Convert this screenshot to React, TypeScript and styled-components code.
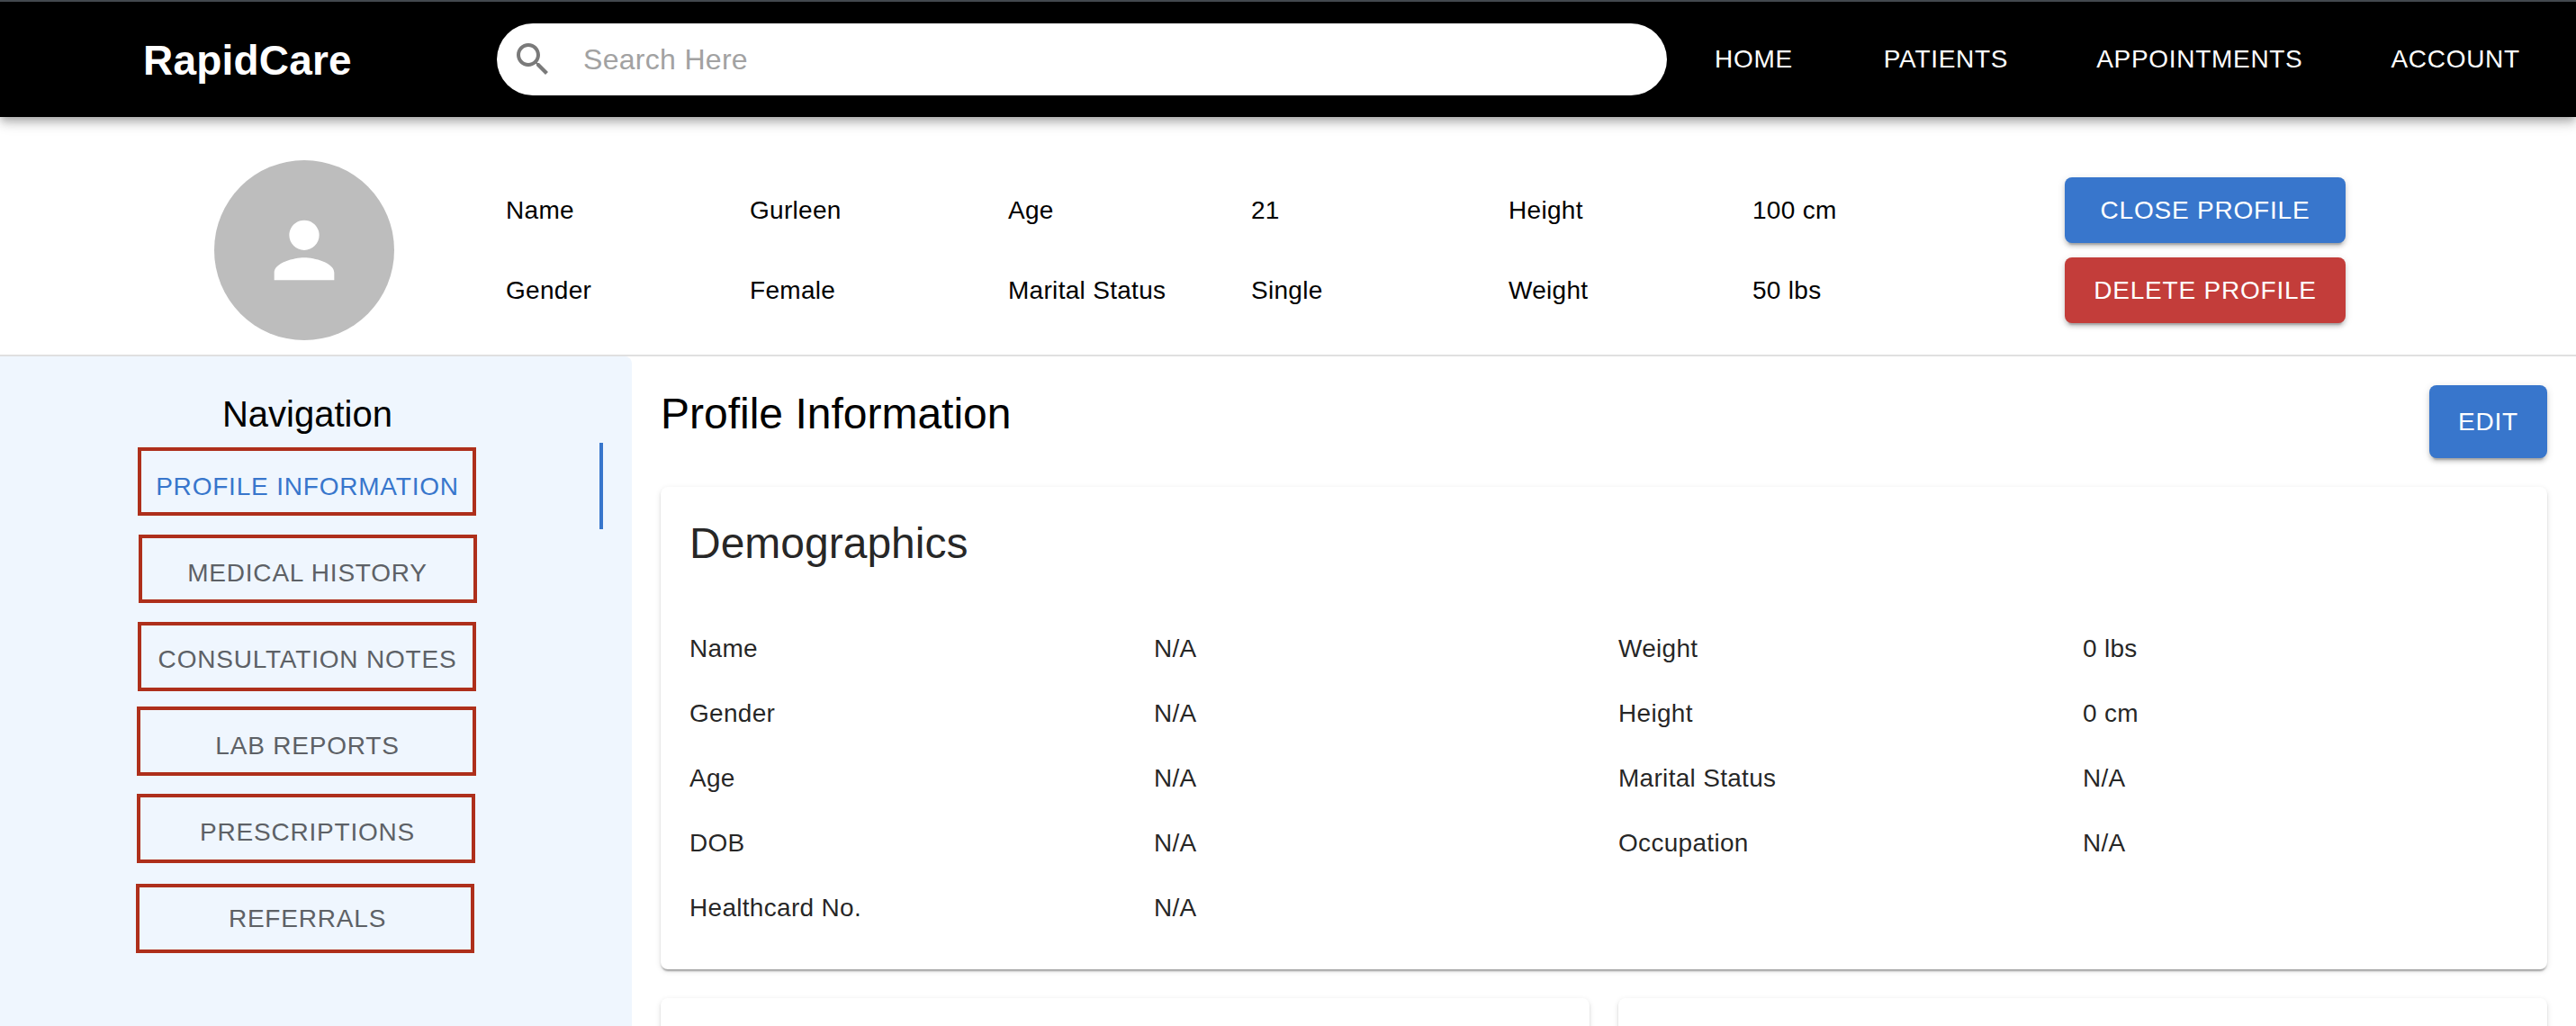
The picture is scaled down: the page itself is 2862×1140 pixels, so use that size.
import React from "react";
import styled, { createGlobalStyle } from "styled-components";

const Global = createGlobalStyle`
  html, body { margin: 0; padding: 0; height: 100%; overflow: hidden; background: #fff; }
  body { font-family: "Liberation Sans", Arial, sans-serif; color: #000; }
  * { box-sizing: border-box; }
`;

const Page = styled.div`
  width: 2862px;
  height: 1140px;
  overflow: hidden;
  display: flex;
  flex-direction: column;
`;

const Header = styled.header`
  position: relative;
  z-index: 2;
  flex: none;
  height: 130px;
  border-top: 2px solid #43484e;
  background: #000;
  display: flex;
  align-items: center;
  padding-left: 159px;
  box-shadow: 0 4px 8px -2px rgba(0,0,0,.2), 0 8px 10px rgba(0,0,0,.14), 0 2px 20px rgba(0,0,0,.12);
`;

const Logo = styled.div`
  width: 393px;
  color: #fff;
  font-size: 46px;
  font-weight: 700;
  line-height: 64px;
  letter-spacing: 0.2px;
  margin-top: 2px;
`;

const SearchBar = styled.label`
  width: 1300px;
  height: 80px;
  border-radius: 40px;
  background: #fff;
  display: flex;
  align-items: center;
  padding-left: 16px;
  svg { width: 48px; height: 48px; fill: #7a7a7a; flex: none; }
`;

const SearchInput = styled.input`
  flex: 1;
  border: 0;
  outline: 0;
  background: transparent;
  margin-left: 30px;
  font: 32px "Liberation Sans", Arial, sans-serif;
  letter-spacing: 0.3px;
  color: #000;
  &::placeholder { color: #a2a2a2; opacity: 1; }
`;

const NavLinks = styled.nav`
  display: flex;
  gap: 98px;
  margin-left: 52px;
`;

const NavLink = styled.a`
  color: #fff;
  font-size: 28px;
  line-height: 44px;
  letter-spacing: 0.7px;
  white-space: nowrap;
  &:first-child { margin: 0 3px 0 1px; }
`;

const ProfileBar = styled.section`
  flex: none;
  height: 266px;
  border-bottom: 2px solid #e0e0e0;
  display: flex;
  align-items: flex-start;
  padding: 48px 0 0 238px;
`;

const Avatar = styled.div`
  width: 200px;
  height: 200px;
  border-radius: 50%;
  background: #bdbdbd;
  display: flex;
  align-items: center;
  justify-content: center;
  svg { width: 100px; height: 100px; fill: #fff; }
`;

const InfoGrid = styled.div`
  margin: 19px 0 0 124px;
  display: grid;
  grid-template-columns: 271px 287px 270px 286px 271px 347px 312px;
  grid-template-rows: 73px 73px;
  row-gap: 16px;
  align-items: center;
`;

const InfoText = styled.div`
  font-size: 28px;
  line-height: 42px;
  letter-spacing: 0.3px;
  padding-top: 1px;
  color: #000;
`;

const RaisedButton = styled.button<{ $tone: "blue" | "red"; $w: number; $h: number }>`
  width: ${(p) => p.$w}px;
  height: ${(p) => p.$h}px;
  border: 0;
  border-radius: 8px;
  padding: 0;
  color: #fff;
  background: ${(p) => (p.$tone === "blue" ? "#3876cc" : "#c33d3a")};
  font: 28px "Liberation Sans", Arial, sans-serif;
  letter-spacing: 0.8px;
  box-shadow: 0 6px 2px -4px rgba(0,0,0,.2), 0 4px 4px rgba(0,0,0,.14), 0 2px 10px rgba(0,0,0,.12);
`;

const Body = styled.div`
  flex: 1;
  display: flex;
  min-height: 0;
`;

const Sidebar = styled.aside`
  flex: none;
  width: 702px;
  background: #eff6fe;
  border-top-right-radius: 8px;
  padding: 32px 32px 0 13px;
`;

const SideTitle = styled.h6`
  margin: 0;
  font-size: 40px;
  font-weight: 400;
  line-height: 64px;
  text-align: center;
`;

const TabList = styled.div`
  display: flex;
  flex-direction: column;
`;

const Tab = styled.div<{ $active?: boolean }>`
  position: relative;
  height: 96px;
  display: flex;
  align-items: center;
  justify-content: center;
  font-size: 28px;
  letter-spacing: 0.8px;
  color: ${(p) => (p.$active ? "#3876cc" : "#5d6166")};
  border-right: 4px solid ${(p) => (p.$active ? "#3876cc" : "transparent")};
  padding: 2px 0 0 4px;
`;

const Annotation = styled.span<{ $l: number; $t: number; $w: number; $h: number }>`
  position: absolute;
  left: ${(p) => p.$l}px;
  top: ${(p) => p.$t}px;
  width: ${(p) => p.$w}px;
  height: ${(p) => p.$h}px;
  border: 4px solid #ae2f1b;
`;

const Content = styled.main`
  flex: 1;
  min-width: 0;
  padding: 32px 32px 0;
  display: flex;
  flex-direction: column;
`;

const TitleRow = styled.div`
  flex: none;
  display: flex;
  justify-content: space-between;
  align-items: flex-start;
  margin-bottom: 32px;
`;

const PageTitle = styled.h5`
  margin: 0;
  font-size: 48px;
  font-weight: 400;
  line-height: 64px;
`;

const Card = styled.section`
  flex: none;
  background: #fff;
  border-radius: 8px;
  box-shadow: 0 4px 2px -2px rgba(0,0,0,.2), 0 2px 2px rgba(0,0,0,.14), 0 2px 6px rgba(0,0,0,.12);
  padding: 32px 0 32px 32px;
`;

const CardTitle = styled.h5`
  margin: -1px 0 49px;
  font-size: 48px;
  font-weight: 400;
  line-height: 64px;
  color: rgba(0,0,0,.87);
`;

const DetailGrid = styled.div`
  display: grid;
  grid-template-columns: repeat(4, 516px);
  grid-auto-rows: 72px;
  align-items: center;
`;

const DetailText = styled.div`
  font-size: 28px;
  line-height: 42px;
  letter-spacing: 0.3px;
  color: rgba(0,0,0,.87);
`;

const CardRow = styled.div`
  flex: none;
  display: grid;
  grid-template-columns: 1fr 1fr;
  gap: 32px;
  margin-top: 32px;
`;

const EmptyCard = styled(Card)`
  height: 300px;
`;

const info = ["Name", "Gurleen", "Age", "21", "Height", "100 cm"];
const info2 = ["Gender", "Female", "Marital Status", "Single", "Weight", "50 lbs"];

const tabs = [
  { label: "PROFILE INFORMATION", box: [140, 5, 376, 76] },
  { label: "MEDICAL HISTORY", box: [141, 6, 376, 76] },
  { label: "CONSULTATION NOTES", box: [140, 7, 376, 77] },
  { label: "LAB REPORTS", box: [139, 5, 377, 77] },
  { label: "PRESCRIPTIONS", box: [139, 6, 376, 77] },
  { label: "REFERRALS", box: [138, 10, 376, 77] },
];

const details = [
  ["Name", "N/A", "Weight", "0 lbs"],
  ["Gender", "N/A", "Height", "0 cm"],
  ["Age", "N/A", "Marital Status", "N/A"],
  ["DOB", "N/A", "Occupation", "N/A"],
  ["Healthcard No.", "N/A", "", ""],
];

export default function App() {
  return (
    <Page>
      <Global />
      <Header>
        <Logo>RapidCare</Logo>
        <SearchBar>
          <svg viewBox="0 0 24 24"><path d="M15.5 14h-.79l-.28-.27C15.41 12.59 16 11.11 16 9.5 16 5.91 13.09 3 9.5 3S3 5.91 3 9.5 5.91 16 9.5 16c1.61 0 3.09-.59 4.23-1.57l.27.28v.79l5 4.99L20.49 19l-4.99-5zm-6 0C7.01 14 5 11.99 5 9.5S7.01 5 9.5 5 14 7.01 14 9.5 11.99 14 9.5 14z" /></svg>
          <SearchInput placeholder="Search Here" />
        </SearchBar>
        <NavLinks>
          <NavLink>HOME</NavLink>
          <NavLink>PATIENTS</NavLink>
          <NavLink>APPOINTMENTS</NavLink>
          <NavLink>ACCOUNT</NavLink>
        </NavLinks>
      </Header>
      <ProfileBar>
        <Avatar>
          <svg viewBox="0 0 24 24"><path d="M12 12c2.21 0 4-1.79 4-4s-1.79-4-4-4-4 1.79-4 4 1.79 4 4 4zm0 2c-2.67 0-8 1.34-8 4v2h16v-2c0-2.66-5.33-4-8-4z" /></svg>
        </Avatar>
        <InfoGrid>
          {info.map((t) => <InfoText key={t}>{t}</InfoText>)}
          <RaisedButton $tone="blue" $w={312} $h={73}>CLOSE PROFILE</RaisedButton>
          {info2.map((t) => <InfoText key={t}>{t}</InfoText>)}
          <RaisedButton $tone="red" $w={312} $h={73}>DELETE PROFILE</RaisedButton>
        </InfoGrid>
      </ProfileBar>
      <Body>
        <Sidebar>
          <SideTitle>Navigation</SideTitle>
          <TabList>
            {tabs.map((t, i) => (
              <Tab key={t.label} $active={i === 0}>
                {t.label}
                <Annotation $l={t.box[0]} $t={t.box[1]} $w={t.box[2]} $h={t.box[3]} />
              </Tab>
            ))}
          </TabList>
        </Sidebar>
        <Content>
          <TitleRow>
            <PageTitle>Profile Information</PageTitle>
            <RaisedButton $tone="blue" $w={131} $h={81}>EDIT</RaisedButton>
          </TitleRow>
          <Card>
            <CardTitle>Demographics</CardTitle>
            <DetailGrid>
              {details.flat().map((t, i) => <DetailText key={i}>{t}</DetailText>)}
            </DetailGrid>
          </Card>
          <CardRow>
            <EmptyCard />
            <EmptyCard />
          </CardRow>
        </Content>
      </Body>
    </Page>
  );
}
